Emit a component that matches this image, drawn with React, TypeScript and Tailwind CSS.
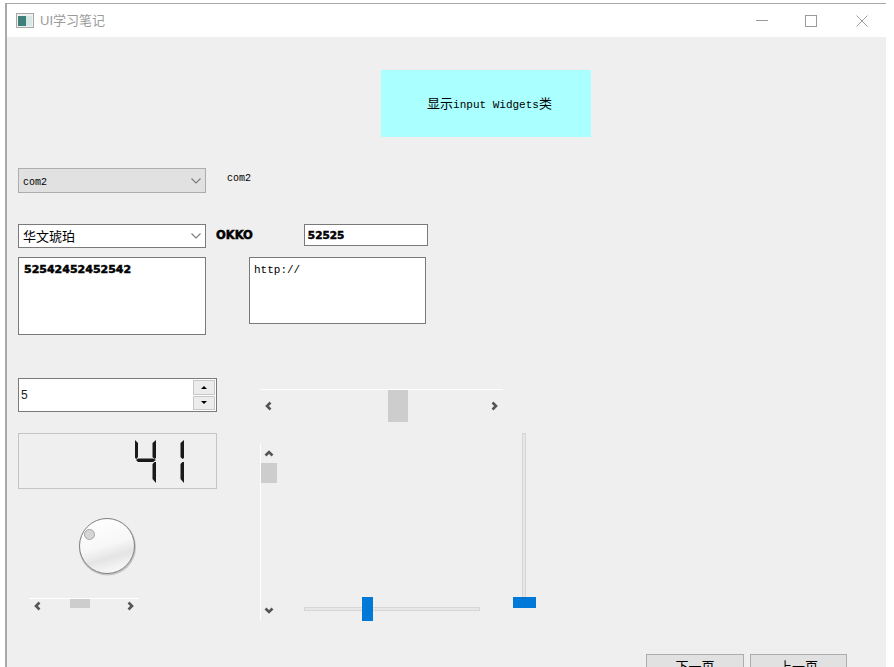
const mono = 'font-["Liberation_Mono","Noto_Sans_CJK_SC",monospace]'

function Chevron({ dir, className = '' }: { dir: 'left' | 'right' | 'up' | 'down'; className?: string }) {
  const points = {
    left: '6.5,1.5 3,5 6.5,8.5',
    right: '3.5,1.5 7,5 3.5,8.5',
    up: '1.5,6.5 5,3 8.5,6.5',
    down: '1.5,3.5 5,7 8.5,3.5',
  }[dir]
  return (
    <svg width="10" height="10" viewBox="0 0 10 10" className={className}>
      <polyline points={points} fill="none" stroke="#555555" strokeWidth="2.6" />
    </svg>
  )
}

function ComboArrow() {
  return (
    <svg width="10" height="6" viewBox="0 0 10 6">
      <polyline points="0.5,0.5 5,5 9.5,0.5" fill="none" stroke="#7a7a7a" strokeWidth="1.1" />
    </svg>
  )
}

function LcdDigits() {
  return (
    <svg width="56" height="46" viewBox="0 0 56 46" fill="#1a1a1a">
      <polygon points="1,0 4,3 4,17 2.5,19 1,18" />
      <polygon points="2,20 4,18.5 19,18.5 22,20 19,22 4,22" />
      <polygon points="22,0 22,18 20.5,19 18.5,17 18.5,3" />
      <polygon points="22,22 22,43 18.5,39 18.5,24 20.5,22" />
      <polygon points="50,0 50,18 48.5,19 46.5,17 46.5,3" />
      <polygon points="50,22 50,43 46.5,39 46.5,24 48.5,22" />
    </svg>
  )
}

function Dial() {
  return (
    <svg width="60" height="60" viewBox="0 0 60 60">
      <defs>
        <linearGradient id="dialFace" x1="0.3" y1="0" x2="0.6" y2="1">
          <stop offset="0" stopColor="#ffffff" />
          <stop offset="0.5" stopColor="#f7f7f7" />
          <stop offset="0.72" stopColor="#e4e4e4" />
          <stop offset="1" stopColor="#fafafa" />
        </linearGradient>
      </defs>
      <circle cx="30.5" cy="31" r="28.5" fill="#a8a8a8" opacity="0.6" />
      <circle cx="30" cy="30" r="27.5" fill="url(#dialFace)" stroke="#808080" strokeWidth="1" />
      <circle cx="12.5" cy="18.5" r="5" fill="#d6d6d6" stroke="#a5a5a5" strokeWidth="1" />
    </svg>
  )
}

function WindowIcon() {
  return (
    <svg width="18" height="15" viewBox="0 0 18 15">
      <rect x="0.5" y="0.5" width="17" height="14" fill="#f0f0f0" stroke="#a8a8a8" />
      <rect x="2" y="3" width="8" height="10" fill="#3f7f7a" />
      <rect x="10" y="3" width="6" height="10" fill="#d5e8e5" />
    </svg>
  )
}

export default function App() {
  return (
    <div className="h-[667px] w-[894px] overflow-hidden bg-white pt-[3px] pl-[5px]">
      <div className="h-[664px] w-[881px] border-t border-l-2 border-[#a9a9a9] bg-[#efefef]">
        {/* title bar */}
        <div className="flex h-[33px] items-center bg-white pl-[9px]">
          <WindowIcon />
          <span className='ml-[6px] font-["Liberation_Sans","Noto_Sans_CJK_SC",sans-serif] text-[13px] text-[#9b9b9b]'>
            UI学习笔记
          </span>
          <div className="ml-auto flex items-center pr-[18px]">
            <div className="h-px w-[12px] bg-[#9a9a9a]" />
            <div className="ml-[37px] h-[12px] w-[12px] border border-[#9a9a9a]" />
            <svg width="12" height="12" viewBox="0 0 12 12" className="ml-[39px]">
              <path d="M0.5 0.5 L11.5 11.5 M11.5 0.5 L0.5 11.5" stroke="#a0a0a0" strokeWidth="1" fill="none" />
            </svg>
          </div>
        </div>

        <div className="pl-[11px]">
          <div className="ml-[363px] mt-[33px] flex h-[67px] w-[210px] items-center justify-center bg-[#aaffff] pl-[7px] pt-[2px]">
            <span className={`${mono} text-[11px] text-black`}>
              <span className="text-[13px]">显示</span>input Widgets<span className="text-[13px]">类</span>
            </span>
          </div>

          <div className="mt-[31px] flex h-[25px]">
            <div className="flex w-[188px] items-center justify-between border border-[#adadad] bg-[#e1e1e1] pl-[4px] pr-[4px]">
              <span className={`${mono} pt-[3px] text-[10px] text-black`}>com2</span>
              <ComboArrow />
            </div>
            <span className={`${mono} ml-[21px] mt-[3px] text-[10px] text-black`}>com2</span>
          </div>

          <div className="mt-[31px] flex h-[24px] items-start">
            <div className="flex h-[24px] w-[188px] items-center justify-between border border-[#7a7a7a] bg-white pl-[4px] pr-[4px]">
              <span className='font-["Noto_Sans_CJK_SC",sans-serif] text-[13px] text-black'>华文琥珀</span>
              <ComboArrow />
            </div>
            <span className='ml-[10px] mt-[3px] font-["DejaVu_Sans",sans-serif] text-[11.5px] font-bold text-black [-webkit-text-stroke:0.5px_black]'>
              OKKO
            </span>
            <div className='ml-[51px] flex h-[22px] w-[124px] items-center border border-[#7a7a7a] bg-white pl-[3px] pt-[2px] font-["DejaVu_Sans",sans-serif] text-[10.5px] font-bold text-black [-webkit-text-stroke:0.5px_black]'>
              52525
            </div>
          </div>

          <div className="mt-[9px] flex items-start">
            <div className='h-[78px] w-[188px] border border-[#7a7a7a] bg-white pl-[5px] pt-[3px] font-["DejaVu_Sans",sans-serif] text-[11px] font-bold leading-[18px] text-black [-webkit-text-stroke:0.5px_black]'>
              52542452452542
            </div>
            <div
              className={`ml-[43px] h-[67px] w-[177px] border border-[#7a7a7a] bg-white pl-[4px] pt-[3px] ${mono} text-[11px] leading-[18px] text-black`}
            >
              http://
            </div>
          </div>

          <div className="mt-[43px] flex items-start">
            {/* left column */}
            <div className="flex w-[199px] flex-col">
              <div className="flex h-[34px] items-center justify-between border border-[#7a7a7a] bg-white pl-[2px] pr-[1px]">
                <span className='font-["Liberation_Sans",sans-serif] text-[12px] text-[#222222]'>5</span>
                <div className="flex h-[30px] w-[22px] flex-col gap-px bg-white">
                  <div className="flex flex-1 items-center justify-center border border-[#c8c8c8] bg-[#ececec]">
                    <div className="h-0 w-0 border-x-[3px] border-b-[3px] border-x-transparent border-b-black" />
                  </div>
                  <div className="flex flex-1 items-center justify-center border border-[#c8c8c8] bg-[#ececec]">
                    <div className="h-0 w-0 border-x-[3px] border-t-[3px] border-x-transparent border-t-black" />
                  </div>
                </div>
              </div>
              <div className="mt-[21px] flex h-[56px] items-start justify-end border border-t-[#a8a8a8] border-l-[#a8a8a8] border-r-[#f8f8f8] border-b-[#f8f8f8] pr-[26px] pt-[6px] outline outline-[#c4c4c4] -outline-offset-1">
                <LcdDigits />
              </div>
              <div className="ml-[59px] mt-[27px]">
                <Dial />
              </div>
              <div className="ml-[11px] mt-[22px] flex h-[14px] w-[110px] items-start border-t border-white">
                <Chevron dir="left" className="ml-[4px] mt-[2px]" />
                <div className="ml-[27px] h-[9px] w-[20px] bg-[#cdcdcd]" />
                <Chevron dir="right" className="ml-auto mr-[4px] mt-[2px]" />
              </div>
            </div>

            {/* right column */}
            <div className="ml-[43px] mt-[11px] flex flex-col">
              <div className="flex h-[33px] w-[243px] items-center border-t border-white">
                <Chevron dir="left" className="ml-[4px]" />
                <div className="ml-[114px] h-[32px] w-[20px] bg-[#cdcdcd]" />
                <Chevron dir="right" className="ml-auto mr-[4px]" />
              </div>
              <div className="mt-[11px] flex items-start">
                <div className="mt-[11px] flex h-[176px] w-[17px] flex-col items-center border-l border-white">
                  <Chevron dir="up" className="mt-[5px]" />
                  <div className="mt-[4px] h-[20px] w-[16px] bg-[#cdcdcd]" />
                  <Chevron dir="down" className="mt-auto mb-[5px]" />
                </div>
                <div className="relative ml-[27px] mt-[164px] flex h-[24px] w-[176px] items-center">
                  <div className="h-[4px] w-full border border-[#d6d6d6] bg-[#e7e7e7]" />
                  <div className="absolute left-[58px] top-0 h-[24px] w-[11px] bg-[#0078d7]" />
                </div>
                <div className="relative ml-[33px] flex h-[175px] w-[23px] justify-center pr-[1px]">
                  <div className="h-full w-[4px] border border-[#d6d6d6] bg-[#e7e7e7]" />
                  <div className="absolute bottom-0 left-0 h-[11px] w-[23px] bg-[#0078d7]" />
                </div>
              </div>
            </div>
          </div>

          {/* page buttons, cut off by the bottom of the shot */}
          <div className="mt-[33px] flex justify-end gap-[6px] pr-[39px]">
            <button className='h-[24px] w-[98px] border border-[#adadad] bg-[#e1e1e1] font-["Noto_Sans_CJK_SC",sans-serif] text-[13px] text-black'>
              下一页
            </button>
            <button className='h-[24px] w-[97px] border border-[#adadad] bg-[#e1e1e1] font-["Noto_Sans_CJK_SC",sans-serif] text-[13px] text-black'>
              上一页
            </button>
          </div>
        </div>
      </div>
    </div>
  )
}
